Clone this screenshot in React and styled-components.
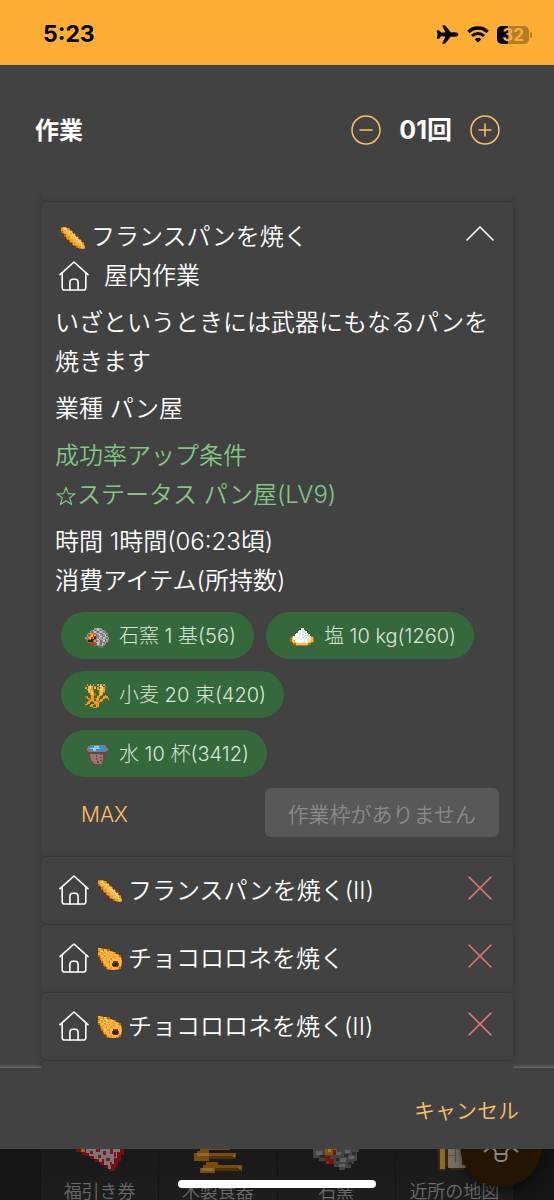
import React, { useState } from "react";
//Styling
import styled, { createGlobalStyle } from "styled-components";
//Icons
import { IoAirplane } from "react-icons/io5";

//data
const consumed = [
  { id: "oven", sprite: "oven", text: "石窯 1 基(56)" },
  { id: "salt", sprite: "salt", text: "塩 10 kg(1260)" },
  { id: "wheat", sprite: "wheat", text: "小麦 20 束(420)" },
  { id: "water", sprite: "water", text: "水 10 杯(3412)" },
];

const otherJobs = [
  { id: 2, sprite: "baguette", name: "フランスパンを焼く(II)" },
  { id: 3, sprite: "cornet", name: "チョコロロネを焼く" },
  { id: 4, sprite: "cornet", name: "チョコロロネを焼く(II)" },
];

const inventory = [
  { id: "ticket", name: "福引き券" },
  { id: "tableware", name: "木製食器" },
  { id: "kiln", name: "石窯" },
  { id: "map", name: "近所の地図" },
];

//Pixel sprites, one letter for each pixel
const palette = {
  o: "#c66a05",
  O: "#f39a1d",
  y: "#ffb84a",
  w: "#ffe0a0",
  d: "#7a3c06",
  k: "#3a2208",
  g: "#9a9a9a",
  G: "#6c6c6c",
  l: "#c9c9c9",
  r: "#e02b10",
  s: "#ffffff",
  S: "#e2e2e4",
  b: "#2f8fe8",
  B: "#7fd0ff",
  p: "#9b7470",
  P: "#6b4646",
};

const sprites = {
  baguette: [
    "................",
    "oOOo............",
    "OywyOo..........",
    "OyOwyOo.........",
    "oOyyywyo........",
    ".oOOywOyo.......",
    "..oOyyywyo......",
    "..oOOOyOwyo.....",
    "...oOOyyywyo....",
    "....oOOOyOwyo...",
    ".....oOOyyywyo..",
    "......oOOOyOwyo.",
    ".......oOOyyywO.",
    "........oOOOywyo",
    "..........oOOyyO",
    "............oOOo",
  ],
  cornet: [
    "................",
    "yOo.............",
    "OyOoyOoo........",
    "oywOywOyOo......",
    "OyOyOyyOyyOo....",
    "yyOywyOyyOyyOo..",
    "oOyyOyyOyyOyyOo.",
    ".OyOyyOyyOOOyyO.",
    ".oOyyOyyOyyyyOyo",
    "..OyyOyOyyyyyyyO",
    "..oOyyOOyydddyyO",
    "...OyOyOydkkkdyO",
    "...oOyyOydkkkdyo",
    "....oOyOyydddyO.",
    ".....oOyOyyyyOo.",
    "......ooOOOOoo..",
  ],
  oven: [
    "................",
    "................",
    "......gglgg.....",
    "....glGglgGlg...",
    "...gGglgGglgGg..",
    "..gloOGglgGglGg.",
    ".gGoyrOGglgGglG.",
    ".goyyrrgGglgGgl.",
    "gGOyrOkGglgGlgGg",
    "GgrOkkGglGglgGlG",
    ".GkkkGgGglGglGgG",
    "..GGrrGglgGgGlG.",
    "....rrrGlgGlgG..",
    "......GGgGglG...",
    ".........GGG....",
    "................",
  ],
  salt: [
    "................",
    "................",
    ".......ss.......",
    "......ssSs......",
    ".....sssSSs.....",
    "....ssSssSSs....",
    "...sssSsSsSSS...",
    ".osssssSsSsSSSo.",
    "oysssSssSsSsSSyo",
    "oysssssSsSsSSSyo",
    "oyyssssssSsSSyyo",
    ".oyywssssSswyyo.",
    "..ooyyyyyyyyoo..",
    "....oooooooo....",
    "................",
    "................",
  ],
  wheat: [
    ".O.y.O..O.y.O...",
    "..ywy.O..ywy.O..",
    "O.ywO.y.O.ywO...",
    ".OwyOo..OywyOo..",
    "..yOyo...OywO...",
    "..OywO...OyOo...",
    "...OyOo..OyO....",
    "....OOo.oOO..O..",
    "oO..OO..OO..OOO.",
    ".OO.OOoOO..OO.oO",
    "..oOOO.OO.OO...o",
    "..OOoOOOoOO.....",
    ".OO...OOOo......",
    "OO..OOoOO.......",
    "...OO..OO.......",
    ".....OOO........",
  ],
  water: [
    "................",
    "...pppppppppp...",
    "..pbbbBBBbbbbp..",
    ".pbBBsBBBBbbbbp.",
    ".ppbbBBbbbbbbpp.",
    ".PppppppppppppP.",
    "..PPPPPPPPPPPP..",
    "..PpppppppPpPP..",
    "..PppppPppppPP..",
    "...PppppppPpP...",
    "...PpppPppppP...",
    "...PppppppPpP...",
    "....PpppPppP....",
    "....PPpppppP....",
    "......PPPP......",
    "................",
  ],
};

function Sprite({ name }) {
  return (
    <SpriteSvg viewBox="0 0 16 16" shapeRendering="crispEdges" aria-hidden="true">
      {sprites[name].map((line, y) =>
        line
          .split("")
          .map((c, x) =>
            c === "." ? null : (
              <rect
                key={`${x}-${y}`}
                x={x}
                y={y}
                width="1"
                height="1"
                fill={palette[c]}
              />
            )
          )
      )}
    </SpriteSvg>
  );
}

function House() {
  return (
    <HouseSvg viewBox="0 0 30 30" aria-hidden="true">
      <path d="M1 13.6 15 1 29 13.6" />
      <path d="M3.2 12v14.8a2.2 2.2 0 0 0 2.2 2.2h19.2a2.2 2.2 0 0 0 2.2-2.2V12" />
      <path d="M10.9 29v-7.8a3 3 0 0 1 3-3h2.2a3 3 0 0 1 3 3V29" />
    </HouseSvg>
  );
}

function Wifi() {
  return (
    <svg width="22" height="17" viewBox="0 0 22 17" fill="none" aria-hidden="true">
      <path d="M1.4 6a13.6 13.6 0 0 1 19.2 0" stroke="#000" strokeWidth="3.4" />
      <path d="M5 10a8.5 8.5 0 0 1 12 0" stroke="#000" strokeWidth="3" />
      <path d="M11 16.6 7.7 13.2a4.7 4.7 0 0 1 6.6 0z" fill="#000" />
    </svg>
  );
}

function InventoryArt({ id }) {
  return (
    <ArtSvg viewBox="0 0 48 24" shapeRendering="crispEdges" aria-hidden="true">
      {id === "ticket" && (
        <>
          <path d="M0 0h48v6h-3v6h-3v6h-3v4h-6v-3h-4v-3h-5v-3h-5v-3h-5v-3h-4V6H6V3H0z" fill="#7a0c0c" />
          <path d="M10 0h34v3h-3v6h-3v6h-3v5h-3v-4h-4v-3h-5v-3h-5V7h-5V4h-3z" fill="#777" />
          <path d="M14 2h3v3h-3zM20 0h4v3h-4zM27 2h3v4h-3zM22 6h3v3h-3zM34 0h3v5h-3zM30 9h4v3h-4zM38 3h2v5h-2zM26 10h2v3h-2zM34 13h2v4h-2z" fill="#8a1414" />
          <path d="M5 0h4v3H5z" fill="#8a6a14" />
        </>
      )}
      {id === "tableware" && (
        <>
          <path d="M6 0h30v1H15v3h27v6H15v2H0V4h3V2h3z" fill="#7a4b0c" />
          <path d="M15 7h27v3H15z" fill="#523006" />
          <path d="M3 4h12v3H3zM39 6h2v2h-2z" fill="#8f6a2c" />
          <path d="M12 13h12v3h24v6H21v3H6v-6h3v-3h3z" fill="#7a4b0c" />
          <path d="M21 19h26v3H21z" fill="#523006" />
          <path d="M8 19h12v3H8zM45 18h2v2h-2z" fill="#8f6a2c" />
        </>
      )}
      {id === "kiln" && (
        <>
          <path d="M1 0h46v3h-2v9h-3v3h-3v4h-6v2h-6v-3h-5v-3h-8v-3H7V9H1z" fill="#444" />
          <path d="M4 2h6v4H4zM24 3h5v3h-5zM33 1h5v3h-5zM28 9h6v4h-6zM37 7h5v3h-5zM27 15h6v3h-6z" fill="#626262" />
          <path d="M8 6h5v3H8zM24 9h3v3h-3zM32 5h4v3h-4zM40 3h4v3h-4zM36 13h4v3h-4z" fill="#2b2b2b" />
          <path d="M13 0h12v6H13z" fill="#87520c" />
          <path d="M16 0h3v3h-3z" fill="#a0801c" />
          <path d="M21 1h3v5h-3zM13 7h5v3h4v5h-5v-3h-4z" fill="#85100a" />
        </>
      )}
      {id === "map" && (
        <>
          <path d="M7 0h27v21H20v-3h-4v4H8V3H7z" fill="#3d270a" />
          <path d="M10 0h5v20h-5z" fill="#8e672e" />
          <path d="M18 0h14v16h4v3H18z" fill="#777264" />
          <path d="M18 6h7v1h-7zM25 0h1v14h-1z" fill="#54504a" />
        </>
      )}
    </ArtSvg>
  );
}

function App() {
  const [count, setCount] = useState(1);
  const [open, setOpen] = useState(true);

  return (
    <>
      <GlobalStyle />
      <Screen>
        <StatusBar>
          <Clock>5:23</Clock>
          <StatusIcons>
            <IoAirplane size={23} />
            <Wifi />
            <Battery>
              <span>32</span>
            </Battery>
          </StatusIcons>
        </StatusBar>

        <Dialog>
          <DialogHeader>
            <h1>作業</h1>
            <Counter>
              <RoundButton
                aria-label="減らす"
                onClick={() => setCount(Math.max(1, count - 1))}
              >
                <svg viewBox="0 0 30 30">
                  <circle cx="15" cy="15" r="14" />
                  <path d="M9 15h12" />
                </svg>
              </RoundButton>
              <output>{String(count).padStart(2, "0")}回</output>
              <RoundButton aria-label="増やす" onClick={() => setCount(count + 1)}>
                <svg viewBox="0 0 30 30">
                  <circle cx="15" cy="15" r="14" />
                  <path d="M9 15h12M15 9v12" />
                </svg>
              </RoundButton>
            </Counter>
          </DialogHeader>

          <JobList>
            <CardEdge $end="top" />
            <Card>
              <CardTitle aria-expanded={open} onClick={() => setOpen(!open)}>
                <Sprite name="baguette" />
                <JobName>フランスパンを焼く</JobName>
                <ChevronSvg viewBox="0 0 28 22" aria-hidden="true">
                  <path d="M1 14 14 1l13 13" />
                </ChevronSvg>
              </CardTitle>
              {open && (
                <>
                  <Place>
                    <House />
                    屋内作業
                  </Place>
                  <Paragraph>
                    いざというときには武器にもなるパンを焼きます
                  </Paragraph>
                  <Paragraph>業種 パン屋</Paragraph>
                  <Paragraph $success>
                    成功率アップ条件
                    <br />
                    <StarSvg viewBox="0 0 22 22" aria-hidden="true">
                      <path d="M11 2.2 13.3 8.6 20 8.8 14.7 12.9 16.6 19.6 11 15.7 5.4 19.6 7.3 12.9 2 8.8 8.7 8.6z" />
                    </StarSvg>
                    ステータス パン屋(LV9)
                  </Paragraph>
                  <Paragraph>
                    時間 1時間(06:23頃)
                    <br />
                    消費アイテム(所持数)
                  </Paragraph>
                  <Chips>
                    {consumed.map((item) => (
                      <Chip key={item.id}>
                        <Sprite name={item.sprite} />
                        {item.text}
                      </Chip>
                    ))}
                  </Chips>
                  <CardActions>
                    <TextButton>MAX</TextButton>
                    <FilledButton disabled>作業枠がありません</FilledButton>
                  </CardActions>
                </>
              )}
            </Card>
            {otherJobs.map((job) => (
              <JobRow key={job.id}>
                <House />
                <Sprite name={job.sprite} />
                <JobName>{job.name}</JobName>
                <CrossSvg viewBox="0 0 24 28" aria-hidden="true">
                  <path d="M1 1l22 22M23 1 1 23" />
                </CrossSvg>
              </JobRow>
            ))}
            <CardEdge $end="bottom" />
          </JobList>

          <DialogActions>
            <TextButton>キャンセル</TextButton>
          </DialogActions>
        </Dialog>

        <Inventory>
          {inventory.map((item) => (
            <Tile key={item.id}>
              <InventoryArt id={item.id} />
              {item.name}
            </Tile>
          ))}
          <Fab aria-label="ヒント">
            <svg width="36" height="48" viewBox="0 0 36 48">
              <path d="M9 26c3 1 4 3 4 6M27 26c-3 1-4 3-4 6M12.5 32h11v3a4 4 0 0 1-4 4h-3a4 4 0 0 1-4-4zM1 30l5-4M35 30l-5-4M9 26a12 12 0 1 1 18 0" />
            </svg>
          </Fab>
          <HomeIndicator />
        </Inventory>
      </Screen>
    </>
  );
}

const GlobalStyle = createGlobalStyle`
  * {
    box-sizing: border-box;
    margin: 0;
    padding: 0;
  }
  body {
    background: #151515;
    color: #fff;
    font-family: Inter, "Noto Sans CJK JP", sans-serif;
    font-size: 24px;
    font-weight: 350;
    line-height: 39px;
  }
  button {
    border: none;
    background: none;
    color: inherit;
    font: inherit;
    cursor: pointer;
  }
`;

const Screen = styled.div`
  height: 100vh;
  display: flex;
  flex-direction: column;
  overflow: hidden;
`;

const StatusBar = styled.div`
  flex: none;
  height: 65px;
  padding: 4px 22px 0 43px;
  display: flex;
  align-items: center;
  justify-content: space-between;
  background: #feae34;
  color: #000;
`;

const Clock = styled.time`
  font-size: 23px;
  font-weight: 700;
`;

const StatusIcons = styled.div`
  display: flex;
  align-items: center;
  gap: 8px;
`;

const Battery = styled.div`
  position: relative;
  width: 32px;
  height: 18px;
  margin-right: 3px;
  border-radius: 5px;
  background: linear-gradient(to right, #000 33%, #b17d2a 33%);
  color: #feae34;
  font-size: 17px;
  font-weight: 700;
  line-height: 18px;
  text-align: center;
  &::after {
    content: "";
    position: absolute;
    right: -3px;
    top: 6px;
    width: 2px;
    height: 6px;
    border-radius: 0 2px 2px 0;
    background: #b17d2a;
  }
`;

const Dialog = styled.main`
  flex: 1;
  min-height: 0;
  display: flex;
  flex-direction: column;
  background: #424242;
`;

const DialogHeader = styled.header`
  flex: none;
  height: 130px;
  padding: 0 54px 0 35px;
  display: flex;
  align-items: center;
  justify-content: space-between;
  h1 {
    font-size: 24px;
    font-weight: 700;
  }
`;

const Counter = styled.div`
  display: flex;
  align-items: center;
  gap: 18px;
  font-size: 25px;
  font-weight: 700;
`;

const RoundButton = styled.button`
  width: 30px;
  height: 30px;
  svg {
    display: block;
    fill: none;
    stroke: #ffc164;
    stroke-width: 1.5;
    stroke-linecap: round;
  }
`;

const JobList = styled.div`
  flex: 1;
  min-height: 0;
  padding: 0 41px;
  display: flex;
  flex-direction: column;
  gap: 1px;
  overflow-y: auto;
  scrollbar-width: none;
  background: linear-gradient(to top, #646464 1px, #4e4e4e 2px, #424242 5px);
`;

const Card = styled.section`
  flex: none;
  padding: 15px 14px 19px;
  border-radius: 5px;
  background: #424242;
  box-shadow: 0 0 2px rgba(0, 0, 0, 0.14), 0 1px 8px rgba(0, 0, 0, 0.12);
`;

const CardEdge = styled(Card)`
  height: ${(props) => (props.$end === "top" ? "6px" : "8px")};
  padding: 0;
  border-radius: ${(props) =>
    props.$end === "top" ? "0 0 5px 5px" : "5px 5px 0 0"};
`;

const CardTitle = styled.button`
  width: 100%;
  padding: 0 5px 0 6px;
  display: flex;
  align-items: center;
  gap: 6px;
`;

const JobName = styled.span`
  flex: 1;
  text-align: left;
`;

const Place = styled.p`
  padding-left: 4px;
  display: flex;
  align-items: center;
  gap: 15px;
`;

const Paragraph = styled.p`
  margin-top: 8px;
  color: ${(props) => (props.$success ? "#81c784" : "inherit")};
`;

const Chips = styled.ul`
  margin-top: 12px;
  padding: 0 6px;
  display: flex;
  flex-wrap: wrap;
  gap: 12px;
  list-style: none;
`;

const Chip = styled.li`
  height: 47px;
  padding: 2px 18px 0 24px;
  display: flex;
  align-items: center;
  gap: 10px;
  border-radius: 24px;
  background: #35683a;
  color: #dce5dc;
  font-size: 20px;
  font-weight: 300;
`;

const CardActions = styled.div`
  margin-top: 11px;
  padding-left: 26px;
  display: flex;
  align-items: center;
  justify-content: space-between;
`;

const TextButton = styled.button`
  padding-top: 3px;
  color: #ffc164;
  font-size: 21px;
`;

const FilledButton = styled.button`
  height: 49px;
  padding: 3px 23px 0;
  border-radius: 6px;
  background: #585858;
  color: #8b8b8b;
  font-size: 21px;
`;

const JobRow = styled(Card)`
  height: 67px;
  padding: 0 21px 1px 18px;
  display: flex;
  align-items: center;
  gap: 6px;
  svg:first-child {
    margin-right: 3px;
  }
`;

const DialogActions = styled.footer`
  flex: none;
  height: 81px;
  padding: 0 35px;
  display: flex;
  align-items: center;
  justify-content: flex-end;
`;

const Inventory = styled.div`
  position: relative;
  flex: none;
  height: 51px;
  padding: 0 41px;
  display: grid;
  grid-template-columns: repeat(4, 1fr);
  gap: 1px;
  overflow: hidden;
  background: #141414;
`;

const Tile = styled.div`
  display: flex;
  flex-direction: column;
  align-items: center;
  gap: 10px;
  background: linear-gradient(#191919, #1e1e1e);
  color: #6a6a6a;
  font-size: 18px;
  line-height: 18px;
`;

const Fab = styled.button`
  position: absolute;
  top: -44px;
  right: 12px;
  width: 82px;
  height: 82px;
  border-radius: 50%;
  background: #241500;
  box-shadow: 0 4px 12px rgba(0, 0, 0, 0.5);
  svg {
    display: block;
    margin: 0 auto;
    fill: none;
    stroke: #858585;
    stroke-width: 2;
  }
`;

const HomeIndicator = styled.div`
  position: absolute;
  left: 50%;
  bottom: 12px;
  width: 198px;
  height: 8px;
  border-radius: 4px;
  background: #fff;
  transform: translateX(-50%);
`;

const SpriteSvg = styled.svg`
  flex: none;
  width: 24px;
  height: 24px;
`;

const HouseSvg = styled.svg`
  flex: none;
  width: 30px;
  height: 30px;
  fill: none;
  stroke: #fff;
  stroke-width: 1.6;
  stroke-linecap: round;
  stroke-linejoin: round;
`;

const ChevronSvg = styled.svg`
  flex: none;
  width: 28px;
  height: 22px;
  fill: none;
  stroke: #fff;
  stroke-width: 1.7;
  stroke-linecap: round;
  stroke-linejoin: round;
`;

const CrossSvg = styled.svg`
  flex: none;
  width: 24px;
  height: 28px;
  fill: none;
  stroke: #e57373;
  stroke-width: 1.6;
  stroke-linecap: round;
`;

const StarSvg = styled.svg`
  width: 22px;
  height: 22px;
  vertical-align: -4px;
  fill: none;
  stroke: #81c784;
  stroke-width: 1.2;
  stroke-linejoin: round;
`;

const ArtSvg = styled.svg`
  flex: none;
  width: 48px;
  height: 24px;
`;

export default App;
